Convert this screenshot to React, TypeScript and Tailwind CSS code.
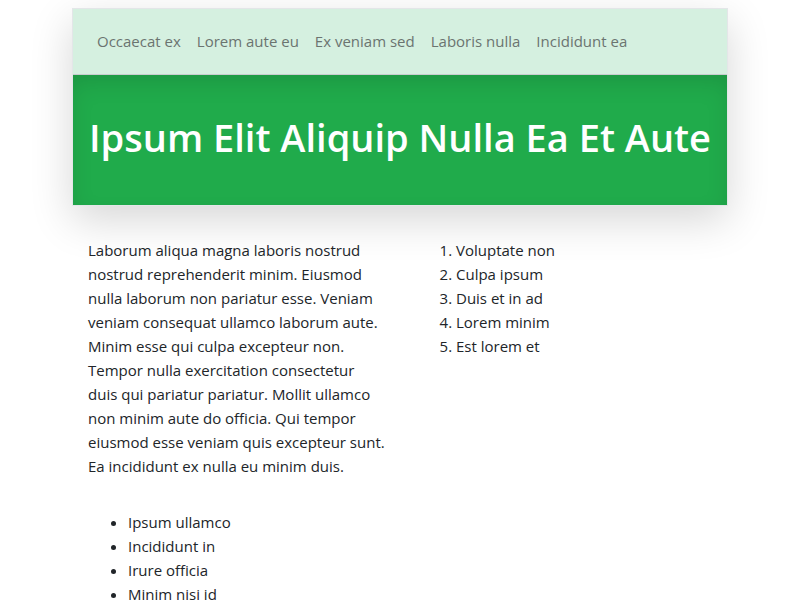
import React from "react";

const navItems = ["Occaecat ex", "Lorem aute eu", "Ex veniam sed", "Laboris nulla", "Incididunt ea"];
const paraLines = [
  "Laborum aliqua magna laboris nostrud",
  "nostrud reprehenderit minim. Eiusmod",
  "nulla laborum non pariatur esse. Veniam",
  "veniam consequat ullamco laborum aute.",
  "Minim esse qui culpa excepteur non.",
  "Tempor nulla exercitation consectetur",
  "duis qui pariatur pariatur. Mollit ullamco",
  "non minim aute do officia. Qui tempor",
  "eiusmod esse veniam quis excepteur sunt.",
  "Ea incididunt ex nulla eu minim duis.",
];
const olItems = ["Voluptate non", "Culpa ipsum", "Duis et in ad", "Lorem minim", "Est lorem et"];
const ulItems = ["Ipsum ullamco", "Incididunt in", "Irure officia", "Minim nisi id"];

export default function App() {
  return (
    <div
      className="min-h-[600px] bg-white text-[15px] leading-6 text-[#212529]"
      style={{ fontFamily: '"Segoe UI", "Open Sans", "Noto Sans", sans-serif' }}
    >
      <div className="mx-auto w-[656px] pt-2">
        <header className="border border-[#e3e6e8] shadow-[0_14px_40px_rgba(0,0,0,0.16)]">
          <nav className="flex h-[66px] items-center border-b border-[#c9cccf] bg-[#d5f0e0] px-4 pb-[2px]">
            {navItems.map((t) => (
              <a key={t} className="px-2 text-[#6b7470]">
                {t}
              </a>
            ))}
          </nav>
          <div className="flex h-[130px] items-center justify-center bg-[#20ab4b] pb-[6px] shadow-[inset_0_10px_24px_-4px_rgba(0,0,0,0.13)]">
            <h1 className="whitespace-nowrap text-[38px] font-semibold leading-none text-white">
              Ipsum Elit Aliquip Nulla Ea Et Aute
            </h1>
          </div>
        </header>
        <main className="grid grid-cols-2 gap-8 px-4 pt-[32px]">
          <div>
            <p className="whitespace-nowrap">
              {paraLines.map((l, i) => (
                <React.Fragment key={i}>
                  {l}
                  {i < paraLines.length - 1 && <br />}
                </React.Fragment>
              ))}
            </p>
            <ul className="mt-8 list-disc pl-10">
              {ulItems.map((t) => (
                <li key={t}>{t}</li>
              ))}
            </ul>
          </div>
          <div>
            <ol className="list-decimal pl-10">
              {olItems.map((t) => (
                <li key={t}>{t}</li>
              ))}
            </ol>
          </div>
        </main>
      </div>
    </div>
  );
}
